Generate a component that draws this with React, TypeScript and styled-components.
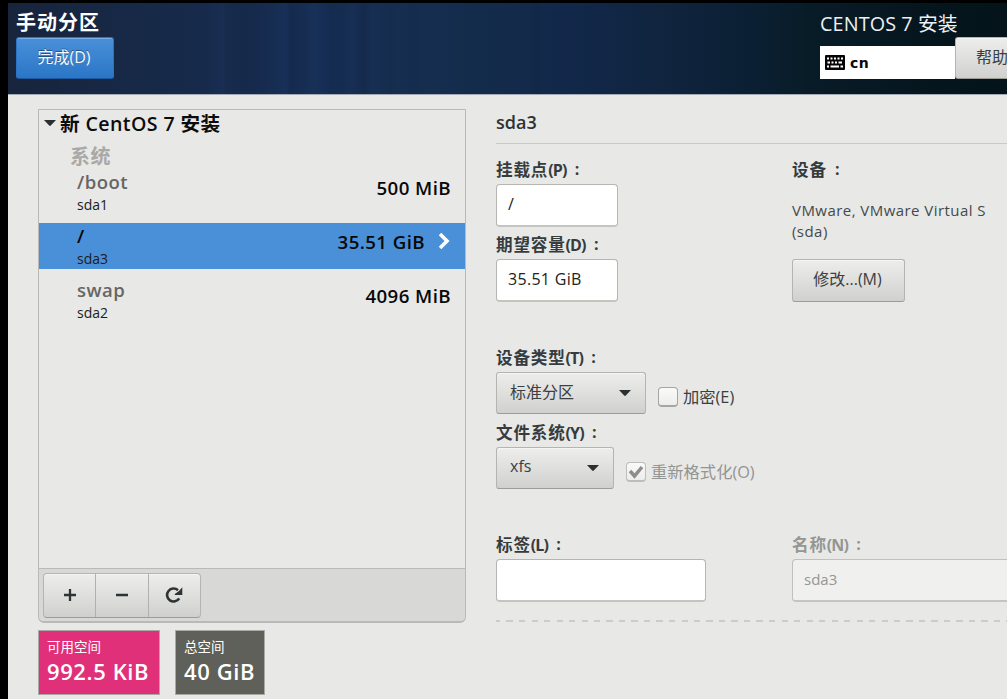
import React from "react";
import styled, { createGlobalStyle, css } from "styled-components";

const GlobalStyle = createGlobalStyle`
  *, *::before, *::after { box-sizing: border-box; }
  body {
    margin: 0;
    background: #000;
    overflow: hidden;
    font-family: "Open Sans", "Noto Sans CJK SC", sans-serif;
    color: #2e3436;
  }
`;

const Screen = styled.div`
  width: 1007px;
  height: 699px;
  padding: 3px 0 0 8px;
  background: #000;
  overflow: hidden;
  display: flex;
  flex-direction: column;
`;

const Header = styled.header`
  height: 92px;
  flex: none;
  display: flex;
  justify-content: space-between;
  border-bottom: 1px solid #a3aab3;
  background:
    linear-gradient(90deg, transparent 195px, rgba(50, 100, 170, 0.06) 215px, transparent 219px, rgba(0, 0, 20, 0.05) 240px, transparent 262px, rgba(60, 110, 180, 0.05) 278px, rgba(0, 0, 20, 0.07) 283px, transparent 298px, rgba(60, 120, 180, 0.04) 306px, rgba(0, 0, 30, 0.07) 325px, transparent 345px, rgba(0, 0, 20, 0.1) 356px, transparent 364px, rgba(0, 0, 20, 0.06) 383px, transparent 395px, rgba(0, 0, 20, 0.05) 405px, transparent 420px, transparent 520px, rgba(0, 10, 40, 0.06) 528px, transparent 536px),
    linear-gradient(90deg, #17243c 0, #172844 90px, #162a4b 200px, #162e55 310px, #162f52 380px, #142c4c 460px, #12284a 560px, #10243e 660px, #0b2035 730px, #081c28 800px, #05151d 930px, #04141a 100%);
`;

const HeaderLeft = styled.div`
  padding-left: 8px;
`;

const ScreenTitle = styled.h1`
  margin: 0;
  height: 34px;
  padding-top: 6px;
  font-size: 20px;
  line-height: 28px;
  font-weight: 700;
  letter-spacing: 1px;
  color: #fff;
  white-space: nowrap;
`;

const HeaderRight = styled.div`
  width: 187px;
  overflow: hidden;
`;

const Product = styled.div`
  height: 34px;
  padding-top: 7px;
  font-size: 19.8px;
  line-height: 28px;
  letter-spacing: 0.1px;
  color: #eef1f3;
  white-space: nowrap;
`;

const HeaderTools = styled.div`
  display: flex;
  align-items: flex-end;
  width: 260px;
`;

const Keyboard = styled.div`
  width: 135px;
  height: 33px;
  padding-left: 5px;
  background: #fff;
  display: flex;
  align-items: center;
  gap: 5px;
  font: 700 14px/20px "DejaVu Sans", sans-serif;
  letter-spacing: 0.5px;
  color: #0a0a0a;
`;

const raised = css`
  border: 1px solid #b4b4b1;
  border-bottom-color: #9c9c99;
  background: linear-gradient(#ededec 0, #e2e2e0 40%, #d0d0ce 100%);
  box-shadow: inset 0 1px #f5f5f4;
`;

const Button = styled.button<{ $width: number; $primary?: boolean; $tall?: boolean; $start?: boolean }>`
  ${raised}
  width: ${(p) => p.$width}px;
  height: ${(p) => (p.$tall ? 43 : 42)}px;
  flex: none;
  padding: 0 ${(p) => (p.$start ? 0 : 2)}px 3px ${(p) => (p.$start ? 20 : 0)}px;
  text-align: ${(p) => (p.$start ? "left" : "center")};
  border-radius: 3px;
  font: 400 16px/24px "Open Sans", "Noto Sans CJK SC", sans-serif;
  color: #3a4042;
  white-space: nowrap;
  ${(p) =>
    p.$primary &&
    css`
      border-color: #2b73c4;
      border-bottom-color: #1c5ba3;
      background: linear-gradient(#4a90d9, #2a76c6);
      box-shadow: inset 0 1px #77afe6;
      color: #f4f8fc;
      text-shadow: 0 -1px rgba(0, 0, 0, 0.4);
    `}
`;

const Body = styled.main`
  flex: 1;
  min-height: 0;
  display: flex;
  background: #e8e8e6;
`;

const Sidebar = styled.section`
  width: 458px;
  padding: 14px 0 0 30px;
`;

const Tree = styled.div`
  width: 428px;
  height: 514px;
  border: 1px solid #b9b9b7;
  border-width: 1px 1px 2px;
  border-radius: 0 0 6px 6px;
  display: flex;
  flex-direction: column;
  overflow: hidden;
`;

const TreeBody = styled.div`
  flex: 1;
`;

const TreeHead = styled.div`
  height: 28px;
  padding: 0 0 3px 5px;
  display: flex;
  align-items: center;
  font-size: 19.6px;
  font-weight: 600;
  letter-spacing: 0.4px;
  color: #0c0c0c;
  gap: 4px;
  white-space: nowrap;
`;

const TreeGroup = styled.div`
  height: 31px;
  padding: 5px 0 0 31px;
  font-size: 20px;
  line-height: 28px;
  font-weight: 700;
  letter-spacing: 0.6px;
  color: #a9a9a7;
`;

const Row = styled.div<{ $selected?: boolean }>`
  height: 46px;
  margin-bottom: 8px;
  padding: 0 14px 0 38px;
  display: flex;
  justify-content: space-between;
  background: ${(p) => (p.$selected ? "#4a90d9" : "transparent")};
  color: ${(p) => (p.$selected ? "#050505" : "#666664")};
`;

const MountName = styled.div`
  height: 26px;
  font-size: 18.5px;
  line-height: 26px;
  font-weight: 600;
  letter-spacing: 0.5px;
`;

const DeviceName = styled.div`
  font-size: 14px;
  line-height: 20px;
  color: #1c1c1c;
`;

const RowSize = styled.div`
  height: 36px;
  display: flex;
  align-items: center;
  gap: 14px;
  font-size: 18.7px;
  font-weight: 600;
  letter-spacing: 0.4px;
  color: #080808;
`;

const Toolbar = styled.div`
  height: 53px;
  padding: 4px;
  border-top: 1px solid #b9b9b7;
  background: #d8d8d6;
`;

const ToolGroup = styled.div`
  ${raised}
  width: 158px;
  height: 45px;
  border-radius: 4px;
  display: flex;
`;

const Tool = styled.div`
  flex: 1;
  padding-bottom: 2px;
  display: flex;
  align-items: center;
  justify-content: center;
  & + & {
    border-left: 1px solid #b0b0ad;
  }
`;

const Spaces = styled.div`
  display: flex;
  gap: 15px;
  margin-top: 7px;
`;

const Space = styled.div<{ $width: number; $color: string }>`
  width: ${(p) => p.$width}px;
  height: 65px;
  padding: 6px 0 0 8px;
  border: 1px solid #aaa9a6;
  background: ${(p) => p.$color};
  color: #fff;
  white-space: nowrap;
`;

const SpaceLabel = styled.div`
  font-size: 13.5px;
  line-height: 21px;
`;

const SpaceValue = styled.div`
  font-size: 22px;
  line-height: 26px;
  font-weight: 600;
  letter-spacing: 0.6px;
`;

const Details = styled.section`
  flex: 1;
  min-width: 0;
  padding: 14px 0 0 30px;
  overflow: hidden;
`;

const DetailTitle = styled.h2`
  margin: 0;
  height: 35px;
  font-size: 18px;
  line-height: 26px;
  font-weight: 600;
  border-bottom: 1px solid #c9c9c7;
`;

const Columns = styled.div`
  display: grid;
  grid-template-columns: 296px 300px;
  grid-template-rows: 389px 69px;
`;

const Column = styled.div``;

const Label = styled.div<{ $space?: number; $dim?: boolean }>`
  height: 26px;
  margin-top: ${(p) => p.$space ?? 0}px;
  padding-bottom: 4px;
  display: flex;
  align-items: center;
  font-size: 16.6px;
  font-weight: 700;
  letter-spacing: 0.8px;
  color: ${(p) => (p.$dim ? "#939694" : "#363c3e")};
  white-space: nowrap;
`;

const Key = styled.span`
  font-weight: 700;
  font-size: 16px;
  letter-spacing: -0.9px;
  padding-top: 2px;
`;

const Colon = styled.span`
  width: 22px;
  text-align: center;
  font: 700 16px/20px "Open Sans", sans-serif;
`;

const Field = styled.div<{ $width: number; $disabled?: boolean }>`
  width: ${(p) => p.$width}px;
  height: 43px;
  padding: 0 11px 2px;
  border: 1px solid ${(p) => (p.$disabled ? "#c0c0be" : "#b5b5b1")};
  border-bottom-width: 2px;
  border-bottom-color: #c4c4c1;
  border-radius: 4px;
  background: ${(p) => (p.$disabled ? "#f0f0ef" : "#fff")};
  color: ${(p) => (p.$disabled ? "#939694" : "#222")};
  display: flex;
  align-items: center;
  font-size: ${(p) => (p.$disabled ? 15 : 16)}px;
  letter-spacing: ${(p) => (p.$disabled ? 0 : 0.3)}px;
`;

const DeviceText = styled.p`
  margin: 16px 0 17px;
  font-size: 15px;
  line-height: 21px;
  letter-spacing: 0.45px;
  color: #444a4c;
  white-space: nowrap;
`;

const Inline = styled.div`
  display: flex;
  gap: 12px;
`;

const Combo = styled.div<{ $width: number }>`
  ${raised}
  width: ${(p) => p.$width}px;
  height: 42px;
  padding: 0 14px 1px 13px;
  border-radius: 3px;
  display: flex;
  align-items: center;
  justify-content: space-between;
  font-size: 16px;
  color: #3a4042;
`;

const ComboText = styled.span`
  margin-top: -3px;
`;

const Check = styled.div<{ $disabled?: boolean }>`
  height: 34px;
  margin-top: 8px;
  display: flex;
  align-items: center;
  gap: 5px;
  font-size: 16.3px;
  line-height: 22px;
  color: ${(p) => (p.$disabled ? "#929593" : "#3a4042")};
  white-space: nowrap;
`;

const CheckBox = styled.span<{ $disabled?: boolean }>`
  width: 20px;
  height: 20px;
  border: 1px solid ${(p) => (p.$disabled ? "#bdbdbb" : "#a5a5a2")};
  border-bottom-width: 2px;
  border-radius: 4px;
  background: linear-gradient(#fafafa, #ededec);
  display: flex;
  align-items: center;
  justify-content: center;
`;

const Dashes = styled.div`
  margin-top: 18px;
  height: 2px;
  background: repeating-linear-gradient(90deg, #cbcbc9 0 4px, transparent 4px 10.5px, #cbcbc9 10.5px 12.5px);
`;

const Caret = ({ width = 12 }: { width?: number }) => (
  <svg width={width} height={width / 2} viewBox="0 0 12 6">
    <path d="M0 0H12L6.8 5.6Q6 6.3 5.2 5.6Z" fill="#2a3032" />
  </svg>
);

const KeyboardIcon = () => (
  <svg width="20" height="15" viewBox="0 0 20 15">
    <rect width="20" height="15" rx="1" fill="#050505" />
    <path
      d="M2 3.5h2m1.500 0h2m1.500 0h2m1.500 0h2m1.500 0h2M2.500 7.500h2.500m1.500 0h2m1.500 0h2m1.500 0h3.500M2 11.500h2m1.500 0h8.500m1.500 0h2.500"
      fill="none"
      stroke="#fff"
      strokeWidth="1.8"
    />
  </svg>
);

const Marked = ({ text, hotkey, dim, space }: { text: string; hotkey?: string; dim?: boolean; space?: number }) => (
  <Label $dim={dim} $space={space}>
    {text}
    {hotkey && <Key>({hotkey})</Key>}
    <Colon>:</Colon>
  </Label>
);

const partitions = [
  { mount: "/boot", device: "sda1", size: "500 MiB" },
  { mount: "/", device: "sda3", size: "35.51 GiB", selected: true },
  { mount: "swap", device: "sda2", size: "4096 MiB" },
];

export default function App() {
  return (
    <Screen>
      <GlobalStyle />
      <Header>
        <HeaderLeft>
          <ScreenTitle>手动分区</ScreenTitle>
          <Button $width={98} $primary>完成(D)</Button>
        </HeaderLeft>
        <HeaderRight>
          <Product>CENTOS 7 安装</Product>
          <HeaderTools>
            <Keyboard>
              <KeyboardIcon />
              cn
            </Keyboard>
            <Button $width={98} $start>帮助</Button>
          </HeaderTools>
        </HeaderRight>
      </Header>
      <Body>
        <Sidebar>
          <Tree>
            <TreeBody>
              <TreeHead>
                <Caret />
                新 CentOS 7 安装
              </TreeHead>
              <TreeGroup>系统</TreeGroup>
              {partitions.map((p) => (
                <Row key={p.device} $selected={p.selected}>
                  <div>
                    <MountName>{p.mount}</MountName>
                    <DeviceName>{p.device}</DeviceName>
                  </div>
                  <RowSize>
                    {p.size}
                    {p.selected && (
                      <svg width="12" height="18" viewBox="0 0 12 18">
                        <path d="M1 2l7 7-7 7" fill="none" stroke="#fff" strokeWidth="3.600" />
                      </svg>
                    )}
                  </RowSize>
                </Row>
              ))}
            </TreeBody>
            <Toolbar>
              <ToolGroup>
                <Tool>
                  <svg width="14" height="14" viewBox="0 0 14 14">
                    <path d="M7 1v12M1 7h12" stroke="#2e3436" strokeWidth="2.300" />
                  </svg>
                </Tool>
                <Tool>
                  <svg width="14" height="14" viewBox="0 0 14 14">
                    <path d="M1 7h12" stroke="#2e3436" strokeWidth="2.300" />
                  </svg>
                </Tool>
                <Tool>
                  <svg width="18" height="16" viewBox="0 0 18 16">
                    <path d="M14.200 11.300A6.500 6.500 0 1 1 13 3.200" fill="none" stroke="#2e3436" strokeWidth="2.600" />
                    <path d="M17.300 0.300V8H9.800V7L14 4Z" fill="#2e3436" />
                  </svg>
                </Tool>
              </ToolGroup>
            </Toolbar>
          </Tree>
          <Spaces>
            <Space $width={122} $color="#df3079">
              <SpaceLabel>可用空间</SpaceLabel>
              <SpaceValue>992.5 KiB</SpaceValue>
            </Space>
            <Space $width={90} $color="#5f6059">
              <SpaceLabel>总空间</SpaceLabel>
              <SpaceValue>40 GiB</SpaceValue>
            </Space>
          </Spaces>
        </Sidebar>
        <Details>
          <DetailTitle>sda3</DetailTitle>
          <Columns>
            <Column>
              <Marked text="挂载点" hotkey="P" space={14} />
              <Field $width={122}>/</Field>
              <Marked text="期望容量" hotkey="D" space={6} />
              <Field $width={122}>35.51 GiB</Field>
              <Marked text="设备类型" hotkey="T" space={44} />
              <Inline>
                <Combo $width={150}>
                  <ComboText>标准分区</ComboText>
                  <Caret />
                </Combo>
                <Check>
                  <CheckBox />
                  加密(E)
                </Check>
              </Inline>
              <Marked text="文件系统" hotkey="Y" space={7} />
              <Inline>
                <Combo $width={118}>
                  <ComboText>xfs</ComboText>
                  <Caret />
                </Combo>
                <Check $disabled>
                  <CheckBox $disabled>
                    <svg width="16" height="14" viewBox="0 0 16 14">
                      <path d="M2 6l4.500 5L14 2" fill="none" stroke="#8b8e8c" strokeWidth="3.500" />
                    </svg>
                  </CheckBox>
                  重新格式化(O)
                </Check>
              </Inline>
            </Column>
            <Column>
              <Marked text="设备" space={14} />
              <DeviceText>
                VMware, VMware Virtual S
                <br />
                (sda)
              </DeviceText>
              <Button $width={113} $tall>修改...(M)</Button>
            </Column>
            <Column>
              <Marked text="标签" hotkey="L" />
              <Field $width={210} />
            </Column>
            <Column>
              <Marked text="名称" hotkey="N" dim />
              <Field $width={260} $disabled>sda3</Field>
            </Column>
          </Columns>
          <Dashes />
        </Details>
      </Body>
    </Screen>
  );
}
